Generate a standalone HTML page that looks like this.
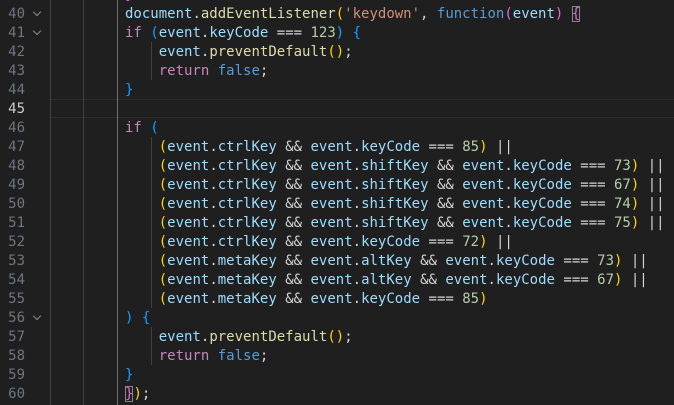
<!DOCTYPE html>
<html><head><meta charset="utf-8"><style>
html,body{margin:0;padding:0;background:#1f1f1f;width:674px;height:405px;overflow:hidden}
body{position:relative;font-family:"DejaVu Sans Mono","Liberation Mono",monospace;font-size:14px}
.ln{position:absolute;left:0;width:25px;text-align:right;color:#6e7681;height:19px;line-height:19px}
.ln.cur{color:#cccccc}
.fold{position:absolute;left:32px;width:10px;height:19px}
.fold:after{content:"";position:absolute;left:2px;top:4px;width:5px;height:5px;border-right:1px solid #8b8b8b;border-bottom:1px solid #8b8b8b;transform:rotate(45deg)}
.c{position:absolute;left:125px;white-space:pre;height:19px;line-height:19px;color:#d4d4d4}
.g{position:absolute;width:1px;background:#404040}
.v{color:#9cdcfe}.f{color:#dcdcaa}.s{color:#ce9178}.k{color:#c586c0}.b{color:#569cd6}.n{color:#b5cea8}
.y{color:#ffd700}.p{color:#da70d6}.bl{color:#179fff}
.box{outline:1px solid #888;outline-offset:-1px}
</style></head><body>
<div style="position:absolute;left:49px;right:0;top:99px;height:1px;background:#2c2c2c"></div>
<div style="position:absolute;left:49px;right:0;top:117px;height:1px;background:#2c2c2c"></div>
<div class="g" style="left:50px;top:0;height:405px"></div>
<div class="g" style="left:83px;top:0;height:405px"></div>
<div class="g" style="left:117px;top:0;height:405px;background:#707070"></div>
<div class="g" style="left:151px;top:42px;height:38px"></div>
<div class="g" style="left:151px;top:137px;height:171px"></div>
<div class="g" style="left:151px;top:327px;height:38px"></div>

<div class="ln" style="top:4.5px">40</div><div class="fold" style="top:4.5px"></div>
<div class="ln" style="top:23.5px">41</div><div class="fold" style="top:23.5px"></div>
<div class="ln" style="top:42.5px">42</div>
<div class="ln" style="top:61.5px">43</div>
<div class="ln" style="top:80.5px">44</div>
<div class="ln cur" style="top:99.5px">45</div>
<div class="ln" style="top:118.5px">46</div>
<div class="ln" style="top:137.5px">47</div>
<div class="ln" style="top:156.5px">48</div>
<div class="ln" style="top:175.5px">49</div>
<div class="ln" style="top:194.5px">50</div>
<div class="ln" style="top:213.5px">51</div>
<div class="ln" style="top:232.5px">52</div>
<div class="ln" style="top:251.5px">53</div>
<div class="ln" style="top:270.5px">54</div>
<div class="ln" style="top:289.5px">55</div>
<div class="ln" style="top:308.5px">56</div><div class="fold" style="top:308.5px"></div>
<div class="ln" style="top:327.5px">57</div>
<div class="ln" style="top:346.5px">58</div>
<div class="ln" style="top:365.5px">59</div>
<div class="ln" style="top:384.5px">60</div>

<div class="c" style="top:-14.5px"><span class="p">}</span></div>
<div class="c" style="top:4.5px"><span class="v">document</span>.<span class="f">addEventListener</span><span class="y">(</span><span class="s">'keydown'</span>, <span class="b">function</span><span class="p">(</span><span class="v">event</span><span class="p">)</span> <span class="p box">{</span></div>
<div class="c" style="top:23.5px"><span class="k">if</span> <span class="bl">(</span><span class="v">event</span>.<span class="v">keyCode</span> === <span class="n">123</span><span class="bl">)</span> <span class="bl">{</span></div>
<div class="c" style="top:42.5px">    <span class="v">event</span>.<span class="f">preventDefault</span><span class="y">()</span>;</div>
<div class="c" style="top:61.5px">    <span class="k">return</span> <span class="b">false</span>;</div>
<div class="c" style="top:80.5px"><span class="bl">}</span></div>
<div class="c" style="top:118.5px"><span class="k">if</span> <span class="bl">(</span></div>
<div class="c" style="top:137.5px">    <span class="y">(</span><span class="v">event</span>.<span class="v">ctrlKey</span> &amp;&amp; <span class="v">event</span>.<span class="v">keyCode</span> === <span class="n">85</span><span class="y">)</span> ||</div>
<div class="c" style="top:156.5px">    <span class="y">(</span><span class="v">event</span>.<span class="v">ctrlKey</span> &amp;&amp; <span class="v">event</span>.<span class="v">shiftKey</span> &amp;&amp; <span class="v">event</span>.<span class="v">keyCode</span> === <span class="n">73</span><span class="y">)</span> ||</div>
<div class="c" style="top:175.5px">    <span class="y">(</span><span class="v">event</span>.<span class="v">ctrlKey</span> &amp;&amp; <span class="v">event</span>.<span class="v">shiftKey</span> &amp;&amp; <span class="v">event</span>.<span class="v">keyCode</span> === <span class="n">67</span><span class="y">)</span> ||</div>
<div class="c" style="top:194.5px">    <span class="y">(</span><span class="v">event</span>.<span class="v">ctrlKey</span> &amp;&amp; <span class="v">event</span>.<span class="v">shiftKey</span> &amp;&amp; <span class="v">event</span>.<span class="v">keyCode</span> === <span class="n">74</span><span class="y">)</span> ||</div>
<div class="c" style="top:213.5px">    <span class="y">(</span><span class="v">event</span>.<span class="v">ctrlKey</span> &amp;&amp; <span class="v">event</span>.<span class="v">shiftKey</span> &amp;&amp; <span class="v">event</span>.<span class="v">keyCode</span> === <span class="n">75</span><span class="y">)</span> ||</div>
<div class="c" style="top:232.5px">    <span class="y">(</span><span class="v">event</span>.<span class="v">ctrlKey</span> &amp;&amp; <span class="v">event</span>.<span class="v">keyCode</span> === <span class="n">72</span><span class="y">)</span> ||</div>
<div class="c" style="top:251.5px">    <span class="y">(</span><span class="v">event</span>.<span class="v">metaKey</span> &amp;&amp; <span class="v">event</span>.<span class="v">altKey</span> &amp;&amp; <span class="v">event</span>.<span class="v">keyCode</span> === <span class="n">73</span><span class="y">)</span> ||</div>
<div class="c" style="top:270.5px">    <span class="y">(</span><span class="v">event</span>.<span class="v">metaKey</span> &amp;&amp; <span class="v">event</span>.<span class="v">altKey</span> &amp;&amp; <span class="v">event</span>.<span class="v">keyCode</span> === <span class="n">67</span><span class="y">)</span> ||</div>
<div class="c" style="top:289.5px">    <span class="y">(</span><span class="v">event</span>.<span class="v">metaKey</span> &amp;&amp; <span class="v">event</span>.<span class="v">keyCode</span> === <span class="n">85</span><span class="y">)</span></div>
<div class="c" style="top:308.5px"><span class="bl">)</span> <span class="bl">{</span></div>
<div class="c" style="top:327.5px">    <span class="v">event</span>.<span class="f">preventDefault</span><span class="y">()</span>;</div>
<div class="c" style="top:346.5px">    <span class="k">return</span> <span class="b">false</span>;</div>
<div class="c" style="top:365.5px"><span class="bl">}</span></div>
<div class="c" style="top:384.5px"><span class="p box">}</span><span class="y">)</span>;</div>
</body></html>
